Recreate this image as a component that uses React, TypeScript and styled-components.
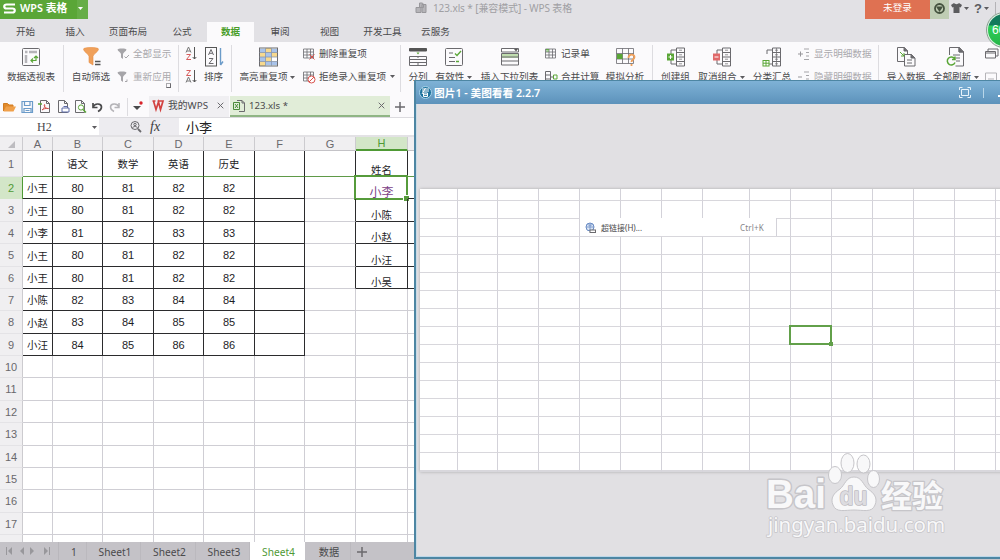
import React from "react";
import styled, { createGlobalStyle, css } from "styled-components";

const ui = `"Noto Sans", "Noto Sans CJK SC", sans-serif`;

const Global = createGlobalStyle`
  * { box-sizing: border-box; }
  body { margin: 0; overflow: hidden; }
  svg { display: block; flex: none; overflow: visible; }
`;

const Page = styled.div`
  position: relative;
  width: 1000px;
  height: 560px;
  overflow: hidden;
  display: flex;
  flex-direction: column;
  background: #e2e1e5;
  font-family: ${ui};
  font-size: 9.6px;
  line-height: 12px;
  color: #4a4a4c;
  white-space: nowrap;
`;

/* ---------- title bar ---------- */
const TitleBar = styled.header`
  display: flex;
  flex: none;
  height: 19px;
  > * { flex: none; }
`;
const Brand = styled.div`
  display: flex;
  align-items: center;
  width: 88px;
  padding: 0 4px 3px 3px;
  gap: 4px;
  background: linear-gradient(90deg, #5aa637 0 77px, #66ad47 77px);
  color: #fff;
  font-weight: 600;
  font-size: 10.8px;
  span { width: 54px; }
`;
const DocTitle = styled.div`
  display: flex;
  align-items: center;
  gap: 6px;
  width: 450px;
  margin-left: 327px;
  padding-bottom: 4px;
  color: #a09fa3;
  font-size: 10px;
  letter-spacing: -0.1px;
`;
const Login = styled.div`
  width: 65px;
  background: #df7152;
  color: #fff;
  text-align: center;
  line-height: 16px;
`;
const SkinBox = styled.div`
  display: grid;
  place-items: center;
  width: 19px;
  padding-bottom: 3px;
  background: #bfcdb4;
`;
const TitleTools = styled.div`
  display: flex;
  align-items: center;
  gap: 2px;
  padding: 0 0 3px 2px;
  b { font: bold 13px "Liberation Sans", sans-serif; margin-left: 3px; color: #5b5b5e; }
`;

/* ---------- menu ---------- */
const Menu = styled.nav`
  display: flex;
  flex: none;
  height: 23px;
  padding-top: 3px;
`;
const MenuItem = styled.div<{ $w: number; $on?: boolean }>`
  width: ${(p) => p.$w}px;
  text-align: center;
  line-height: 20px;
  ${(p) => p.$on && css`background: #fbfafc; color: #4a9e2b; font-weight: 600;`}
`;

/* ---------- ribbon ---------- */
const Ribbon = styled.section`
  display: flex;
  flex: none;
  height: 53px;
  background: #fbfafc;
`;
const Divider = styled.i<{ $ml?: number }>`
  flex: none;
  width: 1px;
  height: 47px;
  margin: 3px 0 0 ${(p) => p.$ml ?? 0}px;
  background: #dddce0;
`;
const BigTool = styled.div<{ $w: number; $ml?: number }>`
  flex: none;
  display: flex;
  flex-direction: column;
  align-items: center;
  width: ${(p) => p.$w}px;
  margin-left: ${(p) => p.$ml ?? 0}px;
  padding-top: 5px;
  gap: 4px;
`;
const ToolLabel = styled.span`
  display: flex;
  align-items: center;
  gap: 3px;
`;
const SmallTools = styled.div<{ $w: number; $ml?: number }>`
  flex: none;
  display: flex;
  flex-direction: column;
  gap: 1px;
  width: ${(p) => p.$w}px;
  margin-left: ${(p) => p.$ml ?? 0}px;
`;
const SmallTool = styled.div<{ $off?: boolean; $gap?: number }>`
  display: flex;
  align-items: center;
  gap: ${(p) => p.$gap ?? 4}px;
  height: 22px;
  padding-top: 1px;
  color: ${(p) => (p.$off ? "#aaa9ad" : "inherit")};
`;
const Launcher = styled.i`
  align-self: flex-end;
  width: 5px;
  height: 5px;
  margin: -5px 7px 0 0;
  border: 1px solid #aaa9ad;
  border-right-color: #6b6a6e;
  border-bottom-color: #6b6a6e;
`;

/* ---------- quick access and document tabs ---------- */
const DocBar = styled.section`
  display: flex;
  flex: none;
  height: 23px;
  padding-top: 1px;
  background: #fbfafc;
  border-bottom: 1px solid #dcdbdf;
`;
const Quick = styled.div`
  display: flex;
  align-items: center;
  width: 149px;
  padding-left: 3px;
  gap: 4.5px;
`;
const QuickRule = styled.i`
  width: 1px;
  height: 18px;
  margin-left: 1px;
  background: #dddce0;
`;
const DocTab = styled.div<{ $w: number; $on?: boolean }>`
  display: flex;
  align-items: center;
  gap: 4px;
  width: ${(p) => p.$w}px;
  padding: 0 5px 0 3px;
  font-size: ${(p) => (p.$on ? 9.6 : 9.8)}px;
  background: ${(p) => (p.$on ? "#e1edd8" : "#f0eff2")};
  border-bottom: 2px solid ${(p) => (p.$on ? "#8fb584" : "#f0eff2")};
  margin-right: ${(p) => (p.$on ? 5 : 1)}px;
  > :last-child { margin-left: auto; }
`;

/* ---------- formula bar ---------- */
const FormulaBar = styled.section`
  display: flex;
  flex: none;
  height: 19px;
  background: #fff;
  border-bottom: 2px solid #e3e2e5;
`;
const NameBox = styled.div`
  display: flex;
  align-items: center;
  justify-content: space-between;
  width: 99px;
  padding: 2px 2px 0 37px;
  font: 12px "Liberation Serif", serif;
`;
const FormulaTools = styled.div`
  display: flex;
  align-items: center;
  gap: 9px;
  width: 80px;
  padding-left: 31px;
  background: #edecf0;
  i { font: italic 14px "Liberation Serif", serif; color: #3c3c3e; }
`;
const FormulaInput = styled.div`
  padding-left: 7px;
  font: 13px/17px "Noto Sans CJK SC", sans-serif;
  color: #222;
`;

/* ---------- sheet ---------- */
const Sheet = styled.main`
  display: grid;
  flex: none;
  width: 415px;
  height: 405px;
  overflow: hidden;
  grid-template-columns: 23px 30px 50px 51px 50px 51px 50px 51px 52px 7px;
  background: #fff;
`;
const Head = styled.div<{ $on?: boolean; $row?: boolean }>`
  display: flex;
  align-items: center;
  justify-content: center;
  overflow: hidden;
  font: 11px "Liberation Sans", sans-serif;
  color: ${(p) => (p.$on ? "#4f9a35" : "#69686c")};
  background: ${(p) => (p.$on ? "#d3e6c8" : "#f0eff1")};
  border: 0 solid ${(p) => (p.$on ? "#4f9a35" : "#d2d1d5")};
  border-right: 1px solid ${(p) => (p.$on && p.$row ? "#4f9a35" : "#cccbcf")};
  border-bottom-width: ${(p) => (p.$row ? (p.$on ? 0 : 1) : p.$on ? 2 : 1)}px;
  border-bottom-color: ${(p) => (p.$row ? "#e4e3e6" : p.$on ? "#4f9a35" : "#c4c3c7")};
`;
const Cell = styled.div<{ $r: string; $b: string; $low?: boolean; $picked?: boolean }>`
  position: relative;
  display: flex;
  align-items: ${(p) => (p.$low ? "flex-end" : "center")};
  justify-content: center;
  padding-bottom: ${(p) => (p.$low && !p.$picked ? 1 : 0)}px;
  font: ${(p) => (p.$picked ? "12px/12px" : "10.4px/11px")} "Noto Sans CJK SC", sans-serif;
  color: ${(p) => (p.$picked ? "#7c3f86" : "#1d1d1f")};
  border-right: 1px solid ${(p) => p.$r};
  border-bottom: 1px solid ${(p) => p.$b};
`;
const Num = styled.span`
  font: 11px "Liberation Sans", sans-serif;
`;
const Pick = styled.div`
  position: absolute;
  inset: -2px -1px -2px -2px;
  border: 2px solid #569b3b;
  &::after {
    content: "";
    position: absolute;
    right: -3px;
    bottom: -3px;
    width: 5px;
    height: 5px;
    background: #569b3b;
    border: 1px solid #fff;
    border-width: 1px 0 0 1px;
  }
`;

/* ---------- sheet tabs ---------- */
const SheetTabs = styled.footer`
  display: flex;
  flex: none;
  height: 18px;
  background: #c4c2c7;
`;
const SheetNav = styled.div`
  display: flex;
  align-items: center;
  width: 59px;
  padding-left: 6px;
  border-right: 1px solid #b9b7bc;
`;
const SheetTab = styled.div<{ $w: number; $on?: boolean }>`
  width: ${(p) => p.$w}px;
  padding-left: 3px;
  text-align: center;
  font-size: 10.2px;
  line-height: 20px;
  border-right: 1px solid ${(p) => (p.$on ? "#fff" : "#bbb9be")};
  ${(p) => p.$on && css`background: #fff; color: #4f9a35;`}
`;
const AddSheet = styled.div`
  display: flex;
  align-items: center;
  padding: 2px 0 0 6px;
`;

/* ---------- picture viewer ---------- */
const Viewer = styled.section`
  position: absolute;
  left: 414px;
  top: 80px;
  width: 620px;
  height: 479px;
  display: flex;
  flex-direction: column;
  background: #e1e0e3;
  border: 2px solid #4d86a3;
  border-top-width: 1px;
  box-shadow: inset 1px 0 0 #c9dbe6, inset 0 -1px 0 #bcd8ea;
`;
const ViewerBar = styled.div`
  display: flex;
  align-items: center;
  height: 23px;
  width: 586px;
  padding-left: 3px;
  gap: 2px;
  background: linear-gradient(#7fb2d6, #5c92bb);
  color: #fff;
  font-size: 10.7px;
  font-weight: 600;
`;
const ViewerTools = styled.div`
  display: flex;
  align-items: center;
  gap: 12px;
  margin-left: auto;
  margin-right: -4px;
`;
const Photo = styled.div`
  position: relative;
  display: grid;
  margin: 85px 0 0 4px;
  width: 600px;
  height: 283px;
  grid-template-columns: 38px 40px 41px 41px 41px 41px 41px 47px 41px 41px 41px 41px 41px 41px 24px;
  grid-template-rows: 12px repeat(15, 18px) 1px;
  overflow: hidden;
  background: #fff;
  box-shadow: 0 0 3px #a9a8ac;
`;
const PhotoCell = styled.i`
  border-right: 1px solid #d3d2d9;
  border-bottom: 1px solid #d8d7dc;
`;
const LinkMenu = styled.div`
  position: absolute;
  left: 160px;
  top: 29px;
  width: 197px;
  height: 18px;
  display: flex;
  align-items: center;
  gap: 5px;
  padding: 1px 12px 0 5px;
  background: #fff;
  border-right: 1px solid #d3d2d9;
  font-size: 8px;
  span:last-child { margin-left: auto; color: #858488; letter-spacing: 0.2px; }
`;
const PhotoPick = styled.div`
  position: absolute;
  left: 369px;
  top: 136px;
  width: 43px;
  height: 20px;
  border: 2px solid #62a04a;
  &::after {
    content: "";
    position: absolute;
    right: -3px;
    bottom: -3px;
    width: 4px;
    height: 4px;
    background: #62a04a;
  }
`;

const Ball = styled.div`
  position: absolute;
  left: 986px;
  top: 12px;
  width: 36px;
  height: 36px;
  border-radius: 50%;
  border: 2px solid #d9f2e0;
  outline: 1px solid #8b9a90;
  outline-offset: -1px;
  padding: 9px 0 0 4px;
  background: linear-gradient(#127b5c 0 11px, #2fcf57 12px, #25b548);
  color: #fff;
  font: 12px "Liberation Sans", sans-serif;
`;
const Watermark = styled.svg`
  position: absolute;
  left: 760px;
  top: 448px;
`;

/* ---------- glyphs ---------- */
const G = "#6b6a6e";
const Svg = ({ w = 20, h = 20, children }: { w?: number; h?: number; children: React.ReactNode }) => (
  <svg width={w} height={h} viewBox={`0 0 ${w} ${h}`} fill="none" stroke={G} strokeWidth="1">
    {children}
  </svg>
);
const Caret = ({ c = "#5c5b5f" }: { c?: string }) => (
  <svg width="5" height="3" viewBox="0 0 5 3"><path d="M0 0h5L2.5 3z" fill={c} /></svg>
);
const Close = () => <Svg w={7} h={7}><path d="M.7.7l5.6 5.6M6.3.7L.7 6.3" /></Svg>;
const Plus = () => <Svg w={10} h={10}><path d="M5 0v10M0 5h10" strokeWidth="1.5" /></Svg>;

const PivotIcon = () => (
  <Svg>
    <rect x="1.5" y="1.5" width="17" height="17" rx="1" />
    <path d="M4 5h2.500M8 5h8M5 8v8" stroke="#b5b4b8" strokeWidth="2.500" />
    <path d="M10 13.500h5V9.500M12 11.500l-2 2 2 2M13 11l2-2 2 2" stroke="#5aa637" strokeWidth="1.200" />
  </Svg>
);
const FunnelIcon = () => (
  <Svg>
    <path d="M2.500 2c0-2 15-2 15 0 0 3-5.500 5-5.500 7.500V18l-4-2.500v-6C8 7 2.500 5 2.500 2z" fill="#f0a05a" stroke="#e58e45" strokeWidth=".6" />
    <path d="M14 14.500h5.500M14 17.500h5.500" stroke="#555" strokeWidth="1.300" />
  </Svg>
);
const SmallFunnel = ({ redo }: { redo?: boolean }) => (
  <Svg w={12} h={12}>
    <path d="M.5 1.500c0-1.500 9-1.500 9 0S6 4.500 6 6v5L4 9.500V6C4 4.500.5 3 .5 1.500z" fill="#a6a5a9" stroke="none" />
    <path d={redo ? "M8 10.500h2V8.500" : "M7.500 8.500l1.500 1.500L12 7"} stroke="#a6a5a9" />
  </Svg>
);
const SortIcon = ({ flip }: { flip?: boolean }) => (
  <Svg w={12} h={13}>
    <g transform={flip ? "translate(0 7)" : undefined}><path d="M1 5.500L3.500 0 6 5.500M2 4h3" stroke="#777" /></g>
    <g transform={flip ? undefined : "translate(0 7)"}><path d="M1.500.500h4L1.500 5.500h4.500" stroke="#d65c5c" /></g>
    <path d="M9.500 0v12M7.700 10l1.800 2 1.800-2" stroke="#555" />
  </Svg>
);
const BigSortIcon = () => (
  <Svg>
    <rect x="1.500" y=".500" width="11" height="18.500" stroke="#555" />
    <path d="M4.500 8L7 2.500 9.500 8M5.300 6.300h3.400M5 11.500h4L5 16.500h4.500" />
    <path d="M16.500 1v17M19 14.500L16.500 18" stroke="#6b9bc9" strokeWidth="1.400" />
  </Svg>
);
const HighlightIcon = () => (
  <Svg>
    <rect x="1.500" y="1" width="18" height="18" fill="#f7d98e" />
    <path d="M2 1.500h5.500v4H2zM7.500 5.500h6v4.500h-6zM2 10h5.500v4.500H2zM13.500 1.500H19v4h-5.500zM7.500 14.500H19v4H7.500z" fill="#a9c3ea" stroke="none" />
    <path d="M13.500 10H19v4.500h-5.500z" fill="#fff" stroke="none" />
    <path d="M1.500 5.500h18M1.500 10h18M1.500 14.500h18M7.500 1v18M13.500 1v18" stroke="#8897b0" strokeWidth=".8" />
  </Svg>
);
const TableIcon = ({ mark }: { mark?: "x" | "no" | "g" }) => (
  <Svg w={12} h={12}>
    <path d="M.5 1h10v9H.5zM.5 4h10M.5 7h10M4 1v9M7.500 1v9" strokeWidth=".8" />
    {mark === "x" && <path d="M6.500 6.500l5 5M11.500 6.500l-5 5" stroke="#d9534f" />}
    {mark === "no" && <><circle cx="8.500" cy="8.500" r="3.500" fill="#fff" stroke="#d9534f" /><path d="M6 11l5-5" stroke="#d9534f" /></>}
    {mark === "g" && <path d="M1 1.500h3M1 3h3" stroke="#62a84a" />}
  </Svg>
);
const SplitIcon = () => (
  <Svg>
    <path d="M1.500 1.500h17v2.500h-17z" fill="#555" stroke="#555" />
    <path d="M8.500 5.500h3l-1.500 2z" fill="#5aa637" stroke="none" />
    <path d="M1.500 9.500h17v9h-17zM1.500 12.500h17M1.500 15.500h17M10 9v2M10 16v3" />
  </Svg>
);
const ValidIcon = () => (
  <Svg>
    <rect x="1.500" y="1.500" width="17" height="17" rx="1" />
    <path d="M5 6h4M5 10.500h6M5 14.500h6" />
    <path d="M11 6.500l2 2 4-4.500M12 14.500h3" stroke="#5aa637" strokeWidth="1.300" />
  </Svg>
);
const ListIcon = () => (
  <Svg>
    <path d="M1.500 1.500h17v3.500h-17z" fill="#fff" /><path d="M14 2h4l-2 2.500z" fill="#555" stroke="none" />
    <path d="M2 7h16v4H2z" fill="#bfdcae" stroke="none" /><path d="M1.500 6.500h17V18h-17zM1.500 10h17M1.500 14h17" />
  </Svg>
);
const MergeIcon = () => (
  <Svg w={13} h={12}>
    <path d="M.5.5h5v11h-5zM.5 4h5M.5 8h5M8 6h-2" /><path d="M8.500 4h3.500v4H8.500z" stroke="#5aa637" />
  </Svg>
);
const WhatIfIcon = () => (
  <Svg>
    <path d="M1.500 1.500h17v15h-17zM1.500 6.500h17M1.500 12h17M7.500 1.500v15M13.500 1.500v15" strokeWidth=".8" />
    <path d="M2 7h5.500v5H2z" fill="#5aa637" stroke="none" />
    <path d="M13.500 11c0-4.500 6-4 6-1 0 2.500-3 2.500-3 5M16.500 17v2" stroke="#f0a05a" strokeWidth="1.800" />
  </Svg>
);
const GroupIcon = ({ mark }: { mark: "+" | "-" | "sum" }) => (
  <Svg>
    <path d="M10.500 1h8v18h-8zM10.500 5.500h8M10.500 10h8M10.500 14.500h8M10 3H5v4M10 17H5v-4" />
    {mark === "sum" && <path d="M14.500 1v18" strokeWidth=".7" />}
    <path d="M13 3.200h3M13 7.800h3M13 12.200h3M13 16.800h3" strokeWidth=".7" />
    {mark === "sum" ? (
      <><rect x="1" y="13.500" width="6" height="5.500" fill="#fff" stroke="#5aa637" /><path d="M4 13.500v5.500M1 16.200h6" stroke="#5aa637" /></>
    ) : (
      <><rect x="1" y="6.500" width="7" height="7" fill={mark === "+" ? "#5aa637" : "#e0696a"} stroke="none" />
        <path d={mark === "+" ? "M4.500 8v4M2.500 10h4" : "M2.500 10h4"} stroke="#fff" /></>
    )}
  </Svg>
);
const DetailIcon = ({ minus }: { minus?: boolean }) => (
  <Svg w={12} h={12}>
    <path d={minus ? "M0 6h4" : "M0 6h5M2.500 3.500v5"} stroke="#98979b" />
    <path d="M6 1h5M8 4.500h3M8 8h3M6 11.500h5" stroke="#a6a5a9" />
  </Svg>
);
const PagesIcon = ({ refresh }: { refresh?: boolean }) => (
  <Svg>
    {refresh ? (
      <>
        <path d="M3.500 8V.5h10l4 4.500v14h-8M13 .5V5h4.500M7 8h7M10 11h4M10 14h4" />
        <path d="M13 .5V5h4.500z" fill="#6b6a6e" />
        <path d="M8.500 11.500a4 4 0 1 0 .5 4M9 9.500v3H6" stroke="#5aa637" strokeWidth="1.500" />
      </>
    ) : (
      <>
        <path d="M1.500.5h7l3 3.500v3M1.500.5v14H8M8.500 7.500h7l3.500 3.500v8H8.500zM11 13h5M11 16h5" />
        <path d="M8 .5V4h3.500zM15 7.500V11h4z" fill="#6b6a6e" />
        <path d="M4 5l4 4M8 6v3H5" stroke="#5aa637" />
      </>
    )}
  </Svg>
);
const PageGlyph = ({ kind }: { kind: "pdf" | "print" | "view" }) => (
  <Svg w={13} h={13}>
    <path d="M2.500.5h6l3 3v9h-9zM8.500.5v3h3" />
    {kind === "pdf" && <><path d="M4 10c3-2 3-5 2.500-5.500C5.500 6 8 9 10.500 8.500 8 8 5 9 4 10z" stroke="#d2514c" /><path d="M0 4h4" stroke="#5aa637" strokeWidth="1.500" /></>}
    {kind === "print" && <path d="M6 8h7v4H6zM7.500 6.500h4" fill="#fff" stroke="#5d6aa8" />}
    {kind === "view" && <><circle cx="8" cy="7.500" r="2.600" fill="#fff" stroke="#5aa637" /><path d="M10 9.500l3 3" stroke="#5aa637" strokeWidth="1.500" /></>}
  </Svg>
);

const bigLabel = (t: string, caret?: boolean) => <ToolLabel>{t}{caret && <Caret />}</ToolLabel>;

/* ---------- sheet data ---------- */
const rows: string[][] = [
  ["", "语文", "数学", "英语", "历史", "", "", "姓名"],
  ["小王", "80", "81", "82", "82", "", "", "小李"],
  ["小王", "80", "81", "82", "82", "", "", "小陈"],
  ["小李", "81", "82", "83", "83", "", "", "小赵"],
  ["小王", "80", "81", "82", "82", "", "", "小汪"],
  ["小王", "80", "81", "82", "82", "", "", "小吴"],
  ["小陈", "82", "83", "84", "84"],
  ["小赵", "83", "84", "85", "85"],
  ["小汪", "84", "85", "86", "86"],
];
const lineAt = (n: number) => Math.round(176 + 22.38 * (n - 1));
const rowHeights = Array.from({ length: 18 }, (_, i) => (i === 0 ? 26 : lineAt(i + 1) - lineAt(i)));
const gridRows = `14px ${rowHeights.map((h) => `${h}px`).join(" ")}`;
const GridSheet = styled(Sheet)`
  grid-template-rows: ${gridRows};
`;
const INK = "#2b2b2d";
const PALE = "#cfced4";

const rightLine = (r: number, c: number) => {
  if (c <= 5) return r < 9 ? INK : PALE;
  if (c === 6 || c === 7) return r < 6 ? INK : PALE;
  return "transparent";
};
const bottomLine = (r: number, c: number) => {
  if (r === 0) return "#5f9a48";
  if (c <= 5 && r < 9) return INK;
  if (c >= 7 && r < 6) return INK;
  return PALE;
};

export default function App() {
  return (
    <Page>
      <Global />
      <TitleBar>
        <Brand>
          <svg width="13" height="11" viewBox="0 0 13 11"><path d="M12 1.500H3.500C.5 1.500.5 5.500 3.500 5.500h6c3 0 3 4 0 4H1" fill="none" stroke="#fff" strokeWidth="2.200" /></svg>
          <span>WPS 表格</span>
          <Caret c="#fff" />
        </Brand>
        <DocTitle>
          <Svg w={12} h={12}><path d="M4.500 1h3l1 1.500v3h-4zM1 5.500h5v5H1zM7 2.500h4v8H7z" fill="#b5b4b8" stroke="#98979b" /></Svg>
          123.xls * [兼容模式] - WPS 表格
        </DocTitle>
        <Login>未登录</Login>
        <SkinBox>
          <svg width="11" height="11" viewBox="0 0 11 11"><circle cx="5.500" cy="5.500" r="4.500" fill="none" stroke="#44523f" strokeWidth="1.800" /><path d="M2 3.500h7L5.500 9z" fill="#44523f" /></svg>
        </SkinBox>
        <TitleTools>
          <svg width="11" height="10" viewBox="0 0 11 10"><path d="M3 0c1 1.500 4 1.500 5 0l3 2-1.300 2.500-1.200-.5v6h-6V4l-1.200.5L0 2z" fill="#5b5b5e" /></svg>
          <Caret /><b>?</b><Caret />
          <Svg w={10} h={12}><path d="M4.500 0v12" stroke="#b4b3b7" /></Svg>
          <Svg w={8} h={10}><path d="M1 10V.5h7" /></Svg>
        </TitleTools>
      </TitleBar>

      <Menu>
        <MenuItem $w={51}>开始</MenuItem>
        <MenuItem $w={48}>插入</MenuItem>
        <MenuItem $w={58}>页面布局</MenuItem>
        <MenuItem $w={50}>公式</MenuItem>
        <MenuItem $w={47} $on>数据</MenuItem>
        <MenuItem $w={52}>审阅</MenuItem>
        <MenuItem $w={47}>视图</MenuItem>
        <MenuItem $w={59}>开发工具</MenuItem>
        <MenuItem $w={47}>云服务</MenuItem>
      </Menu>

      <Ribbon>
        <BigTool $w={62}><PivotIcon />{bigLabel("数据透视表")}</BigTool>
        <Divider $ml={1} />
        <BigTool $w={52} $ml={1}><FunnelIcon />{bigLabel("自动筛选")}</BigTool>
        <SmallTools $w={61}>
          <SmallTool $off><SmallFunnel />全部显示</SmallTool>
          <SmallTool $off><SmallFunnel redo />重新应用</SmallTool>
          <Launcher style={undefined} />
        </SmallTools>
        <Divider />
        <SmallTools $w={12} $ml={6}>
          <SmallTool><SortIcon /></SmallTool>
          <SmallTool><SortIcon flip /></SmallTool>
        </SmallTools>
        <BigTool $w={33}><BigSortIcon />{bigLabel("排序")}</BigTool>
        <Divider $ml={1} />
        <BigTool $w={71}><HighlightIcon />{bigLabel("高亮重复项", true)}</BigTool>
        <SmallTools $w={97}>
          <SmallTool><TableIcon mark="x" />删除重复项</SmallTool>
          <SmallTool><TableIcon mark="no" />拒绝录入重复项<Caret /></SmallTool>
        </SmallTools>
        <Divider />
        <BigTool $w={34}><SplitIcon />{bigLabel("分列")}</BigTool>
        <BigTool $w={38}><ValidIcon />{bigLabel("有效性", true)}</BigTool>
        <BigTool $w={71} $ml={1}><ListIcon />{bigLabel("插入下拉列表")}</BigTool>
        <SmallTools $w={59}>
          <SmallTool><TableIcon mark="g" />记录单</SmallTool>
          <SmallTool $gap={3}><MergeIcon />合并计算</SmallTool>
        </SmallTools>
        <BigTool $w={42}><WhatIfIcon />{bigLabel("模拟分析")}</BigTool>
        <Divider $ml={6} />
        <BigTool $w={45}><GroupIcon mark="+" />{bigLabel("创建组")}</BigTool>
        <BigTool $w={47}><GroupIcon mark="-" />{bigLabel("取消组合", true)}</BigTool>
        <BigTool $w={52} $ml={1}><GroupIcon mark="sum" />{bigLabel("分类汇总")}</BigTool>
        <SmallTools $w={80}>
          <SmallTool $off><DetailIcon />显示明细数据</SmallTool>
          <SmallTool $off><DetailIcon minus />隐藏明细数据</SmallTool>
        </SmallTools>
        <Divider />
        <BigTool $w={52} $ml={1}><PagesIcon />{bigLabel("导入数据")}</BigTool>
        <BigTool $w={48}><PagesIcon refresh />{bigLabel("全部刷新", true)}</BigTool>
        <SmallTools $w={15} $ml={5}>
          <SmallTool><Svg w={14} h={12}><path d="M3 3.500V1h10v7h-2M.5 3.500h10V10H.5zM.5 5h10" /></Svg></SmallTool>
          <SmallTool><Svg w={14} h={12}><path d="M.5 2h11v9H.5zM3 8h6" stroke="#b5b4b8" /></Svg></SmallTool>
        </SmallTools>
      </Ribbon>

      <DocBar>
        <Quick>
          <Svg w={13} h={12}><path d="M.5 10V2.500h4L6 4h4v2" fill="#e08a2c" stroke="#d27c22" /><path d="M.5 10.500L3 5.500h10l-2.500 5z" fill="#f0a04a" stroke="none" /></Svg>
          <Svg w={13} h={12}><path d="M1 .5h10.500v11H1zM3.500.5v4h5.500v-4M3 11.500v-4h7v4M4.500 9.500h4" stroke="#6b9bc9" strokeWidth="1.200" /></Svg>
          <PageGlyph kind="pdf" />
          <PageGlyph kind="print" />
          <PageGlyph kind="view" />
          <Svg w={13} h={12}><path d="M2 2v4.500h4.500M2 6c2-4.500 8.500-3.500 8.500 0 0 2-1.500 3.500-3.500 4.500" stroke="#4a4a4c" strokeWidth="1.700" /></Svg>
          <Svg w={13} h={12}><path d="M11 2v4.500H6.500M11 6C9 1.500 2.500 2.500 2.500 6c0 2 1.500 3.500 3.500 4.500" stroke="#b5b4b8" strokeWidth="1.500" /></Svg>
          <QuickRule />
          <Svg w={13} h={12}><path d="M1 5h8L5 9z" fill="#4a4a4c" stroke="none" /><circle cx="9" cy="2" r="1.700" fill="#d8232a" stroke="none" /></Svg>
        </Quick>
        <DocTab $w={80}>
          <Svg w={12} h={11}><path d="M.5 1h3M1.500 1l2.500 8.500L6.500 2l2 7.500L11 1H5.500" stroke="#d2413f" strokeWidth="1.700" /></Svg>
          <span>我的WPS</span>
          <Close />
        </DocTab>
        <DocTab $w={160} $on>
          <Svg w={12} h={12}><path d="M4 .5h5l2.500 2.500v8.500H6M9 .5V3h2.500" /><path d="M.5 2.500h6v7h-6zM2 4l3 4M5 4L2 8" stroke="#4a8b38" /></Svg>
          <span>123.xls *</span>
          <Close />
        </DocTab>
        <ToolLabel><Plus /></ToolLabel>
      </DocBar>

      <FormulaBar>
        <NameBox>H2<Caret /></NameBox>
        <FormulaTools>
          <Svg w={11} h={11}><circle cx="5" cy="4.500" r="4" /><circle cx="5" cy="3.500" r="1.200" /><path d="M2.500 7c.5-2 4.500-2 5 0" /><path d="M8 8l3 3" strokeWidth="1.800" /></Svg>
          <i>fx</i>
        </FormulaTools>
        <FormulaInput>小李</FormulaInput>
      </FormulaBar>

      <GridSheet>
        <Head><svg width="8" height="8" viewBox="0 0 8 8"><path d="M8 1v7H1z" fill="#bdbcc0" /></svg></Head>
        {"ABCDEFGH".split("").map((l) => <Head key={l} $on={l === "H"}>{l}</Head>)}
        <Head />
        {rowHeights.map((_, r) => (
          <React.Fragment key={r}>
            <Head $row $on={r === 1}>{r < 17 ? r + 1 : ""}</Head>
            {Array.from({ length: 9 }, (_, c) => {
              const v = rows[r]?.[c] ?? "";
              const picked = r === 1 && c === 7;
              return (
                <Cell key={c} $r={rightLine(r, c)} $b={bottomLine(r, c)} $low={c === 7} $picked={picked}>
                  {/^\d/.test(v) ? <Num>{v}</Num> : v}
                  {picked && <Pick />}
                </Cell>
              );
            })}
          </React.Fragment>
        ))}
      </GridSheet>

      <SheetTabs>
        <SheetNav>
          <svg width="44" height="8" viewBox="0 0 44 8" fill="#98979b"><path d="M0 0h1v8H0zM6 0v8L2 4zM18 0v8l-4-4zM24 0v8l4-4zM38 0v8l4-4zM43 0h1v8h-1z" /></svg>
        </SheetNav>
        <SheetTab $w={28}>1</SheetTab>
        <SheetTab $w={54}>Sheet1</SheetTab>
        <SheetTab $w={55}>Sheet2</SheetTab>
        <SheetTab $w={54}>Sheet3</SheetTab>
        <SheetTab $w={55} $on>Sheet4</SheetTab>
        <SheetTab $w={46}>数据</SheetTab>
        <AddSheet><Plus /></AddSheet>
      </SheetTabs>

      <Viewer>
        <ViewerBar>
          <svg width="13" height="13" viewBox="0 0 13 13"><circle cx="6.500" cy="6.500" r="6" fill="#1c719c" stroke="#a8d4ea" /><path d="M3 3h7M3 5h7M6.500 2L3 8M4.500 7h4v3.500h-4zM4.500 8.700h4" stroke="#fff" fill="none" /></svg>
          图片1 - 美图看看 2.2.7
          <ViewerTools>
            <Svg w={12} h={11}><path d="M2.500 2.500h7v6h-7zM.5 3V.5h3M8.500.5h3V3M11.500 8v2.500h-3M3.500 10.500h-3V8" stroke="#e8f3fa" /></Svg>
            <Svg w={1} h={10}><path d="M.5 0v10" stroke="#b9d6e9" /></Svg>
            <Svg w={10} h={10}><path d="M2 8h8" stroke="#fff" strokeWidth="2" /></Svg>
          </ViewerTools>
        </ViewerBar>
        <Photo>
          {Array.from({ length: 17 * 15 }, (_, i) => <PhotoCell key={i} />)}
          <LinkMenu>
            <Svg w={11} h={11}><circle cx="5" cy="5" r="4" fill="#dbe6f5" stroke="#6a8cc4" /><path d="M5 1v8M1 5h8M2.500 2.500c2 1 3 1 5 0" stroke="#6a8cc4" strokeWidth=".8" /><rect x="5" y="8" width="5.500" height="2.500" fill="#fff" /></Svg>
            <span>超链接(H)...</span>
            <span>Ctrl+K</span>
          </LinkMenu>
          <PhotoPick />
        </Photo>
      </Viewer>

      <Watermark width="200" height="100" viewBox="0 0 200 100" fill="#f8f8f9" stroke="#c6c5c9" strokeWidth="1" strokeLinejoin="round">
        <text x="6" y="60" fontFamily="Liberation Sans, sans-serif" fontWeight="bold" fontSize="40" textLength="60" lengthAdjust="spacingAndGlyphs" strokeWidth="3" paintOrder="stroke">Bai</text>
        <ellipse cx="75" cy="27" rx="6.500" ry="8.500" />
        <ellipse cx="87.500" cy="15" rx="6.500" ry="9.500" />
        <ellipse cx="103.500" cy="16" rx="6.500" ry="9" />
        <ellipse cx="113.500" cy="31" rx="6" ry="8.500" />
        <path d="M94 29c-8 0-9 8-14 12-6 4-10 9-7 16 3 8 12 5 21 5s18 3 21-5c3-7-1-12-7-16-5-4-6-12-14-12z" />
        <text x="79.500" y="57" fontFamily="Liberation Sans, sans-serif" fontWeight="bold" fontSize="25" fill="#dddce0" stroke="#bdbcc1" strokeWidth="1.600" paintOrder="stroke" textLength="28" lengthAdjust="spacingAndGlyphs">du</text>
        <text x="121" y="59" fontFamily="Noto Sans CJK SC, sans-serif" fontWeight="bold" fontSize="31" strokeWidth="2.500" paintOrder="stroke" textLength="62" lengthAdjust="spacingAndGlyphs">经验</text>
        <text x="8" y="84" fontFamily="Noto Sans, sans-serif" fontSize="20" strokeWidth="1.600" paintOrder="stroke" textLength="177" lengthAdjust="spacingAndGlyphs">jingyan.baidu.com</text>
      </Watermark>

      <Ball>60</Ball>
    </Page>
  );
}
